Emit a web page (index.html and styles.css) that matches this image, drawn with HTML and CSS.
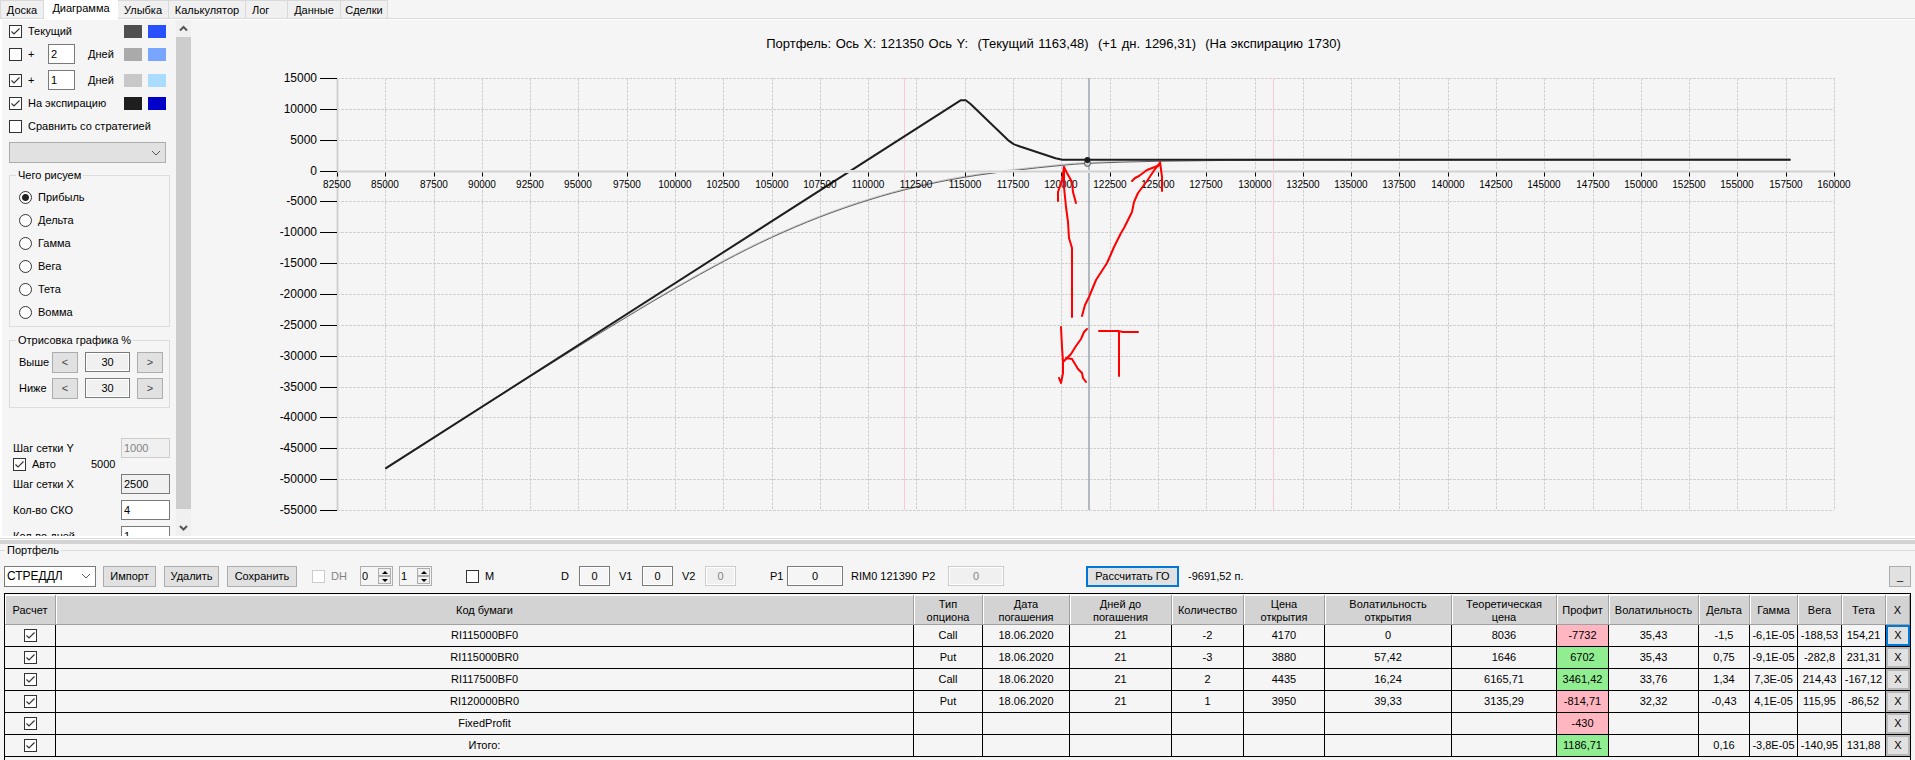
FILE: index.html
```
<!DOCTYPE html>
<html lang="ru">
<head>
    <meta charset="UTF-8">
    <meta name="viewport" content="width=device-width, initial-scale=1.0">
    <title>Диаграмма</title>
    <link rel="stylesheet" href="styles.css">
</head>
<body>
    <nav class="tabs">
        <button class="tab t-board">Доска</button>
        <button class="tab active">Диаграмма</button>
        <button class="tab t-smile">Улыбка</button>
        <button class="tab t-calc">Калькулятор</button>
        <button class="tab t-log">Лог</button>
        <button class="tab t-data">Данные</button>
        <button class="tab t-deals">Сделки</button>
    </nav>
    <main>
        <aside>
            <div class="settings">
                <div class="line">
                    <input type="checkbox" id="now" checked><label for="now">Текущий</label>
                    <i class="swatch c1"></i><i class="swatch c2"></i>
                </div>
                <div class="line tall">
                    <input type="checkbox" id="plus2"><label for="plus2">+</label>
                    <input type="text" class="days" id="days2" value="2"><label for="days2">Дней</label>
                    <i class="swatch c3"></i><i class="swatch c4"></i>
                </div>
                <div class="line tall">
                    <input type="checkbox" id="plus1" checked><label for="plus1">+</label>
                    <input type="text" class="days" id="days1" value="1"><label for="days1">Дней</label>
                    <i class="swatch c5"></i><i class="swatch c6"></i>
                </div>
                <div class="line">
                    <input type="checkbox" id="exp" checked><label for="exp">На экспирацию</label>
                    <i class="swatch c7"></i><i class="swatch c8"></i>
                </div>
                <div class="line tall">
                    <input type="checkbox" id="cmp"><label for="cmp">Сравнить со стратегией</label>
                </div>
                <select class="strategy" aria-label="Стратегия" disabled><option></option></select>

                <fieldset class="group what">
                    <legend>Чего рисуем</legend>
                    <label><input type="radio" name="what" checked>Прибыль</label>
                    <label><input type="radio" name="what">Дельта</label>
                    <label><input type="radio" name="what">Гамма</label>
                    <label><input type="radio" name="what">Вега</label>
                    <label><input type="radio" name="what">Тета</label>
                    <label><input type="radio" name="what">Вомма</label>
                </fieldset>

                <fieldset class="group range">
                    <legend>Отрисовка графика %</legend>
                    <div class="step">
                        <label for="above">Выше</label>
                        <button>&lt;</button><input type="text" id="above" value="30" readonly><button>&gt;</button>
                    </div>
                    <div class="step">
                        <label for="below">Ниже</label>
                        <button>&lt;</button><input type="text" id="below" value="30" readonly><button>&gt;</button>
                    </div>
                </fieldset>

                <div class="params">
                    <div class="param first"><label for="gy">Шаг сетки Y</label><input type="text" id="gy" value="1000" disabled></div>
                    <div class="auto"><input type="checkbox" id="auto" checked><label for="auto">Авто</label><span>5000</span></div>
                    <div class="param"><label for="gx">Шаг сетки X</label><input type="text" id="gx" value="2500" readonly></div>
                    <div class="param"><label for="sko">Кол-во СКО</label><input type="text" id="sko" value="4"></div>
                    <div class="param"><label for="dn">Кол-во дней</label><input type="text" id="dn" value="1"></div>
                </div>
            </div>
            <div class="scroll">
                <svg viewBox="0 0 15 17"><path d="M4 10.500L7.500 7l3.500 3.500"/></svg>
                <div class="thumb"></div>
                <svg viewBox="0 0 15 17"><path d="M4 7l3.500 3.500L11 7"/></svg>
            </div>
        </aside>
        <section class="chart">
            <svg id="plot"></svg>
            <!-- пометки от руки -->
            <svg class="ink" viewBox="0 0 1723 516" preserveAspectRatio="none">
                <polyline points="880,297 880,228 877,218 876,202 874,187 872,167 872,147"/>
                <polyline points="866,181 866,172 870,160 872,147 875,153 880,162 881,172 884,183"/>
                <polyline points="890,296 893,285 897,277 904,260 915,243 919,234 922,227 929,213 932,208 940,192 942,182 946,173 955,161 963,149 968,143"/>
                <polyline points="940,161 943,158 947,156 955,150 968,145"/>
                <polyline points="968,142 970,157 970,171"/>
                <polyline points="869,307 870,327 871,342 871,353 869,363 867,358"/>
                <polyline points="895,309 892,312 889,319 884,326 879,334 871,342"/>
                <polyline points="874,338 880,339 886,349 890,353 891,358 894,362"/>
                <polyline points="907,311 926,311 931,312 946,312"/>
                <polyline points="927,312 927,356"/>
            </svg>
        </section>
    </main>
    <div class="splitter"></div>
    <fieldset class="portfolio">
        <legend>Портфель</legend>
        <div class="toolbar">
            <select class="name" aria-label="Портфель"><option>СТРЕДДЛ</option></select>
            <button class="btn import">Импорт</button>
            <button class="btn remove">Удалить</button>
            <button class="btn save">Сохранить</button>
            <label class="dh"><input type="checkbox" disabled>DH</label>
            <div class="spin">
                <input type="text" value="0" aria-label="DH от">
                <div><button class="up" aria-label="Больше"></button><button class="down" aria-label="Меньше"></button></div>
            </div>
            <div class="spin">
                <input type="text" value="1" aria-label="DH до">
                <div><button class="up" aria-label="Больше"></button><button class="down" aria-label="Меньше"></button></div>
            </div>
            <label class="m"><input type="checkbox">M</label>
            <label class="d" for="d">D</label><input type="text" class="num" id="d" value="0">
            <label class="v" for="v1">V1</label><input type="text" class="num" id="v1" value="0">
            <label class="v" for="v2">V2</label><input type="text" class="num" id="v2" value="0" disabled>
            <label class="p1" for="p1">P1</label><input type="text" class="num wide" id="p1" value="0">
            <span class="rim">RIM0 121390</span>
            <label class="p2" for="p2">P2</label><input type="text" class="num wide" id="p2" value="0" disabled>
            <button class="btn calc">Рассчитать ГО</button>
            <span class="go">-9691,52 п.</span>
            <button class="btn fold">_</button>
        </div>
        <div class="grid">
            <table>
                <colgroup>
                    <col class="w-check"><col><col class="w-type"><col class="w-date"><col class="w-days"><col class="w-qty">
                    <col class="w-price"><col class="w-vopen"><col class="w-theor"><col class="w-profit"><col class="w-vol">
                    <col class="w-delta"><col class="w-gamma"><col class="w-vega"><col class="w-vega"><col class="w-x">
                </colgroup>
                <thead>
                    <tr>
                        <th>Расчет</th><th>Код бумаги</th><th>Тип<br>опциона</th><th>Дата<br>погашения</th><th>Дней до<br>погашения</th>
                        <th>Количество</th><th>Цена<br>открытия</th><th>Волатильность<br>открытия</th><th>Теоретическая<br>цена</th>
                        <th>Профит</th><th>Волатильность</th><th>Дельта</th><th>Гамма</th><th>Вега</th><th>Тета</th><th>X</th>
                    </tr>
                </thead>
                <tbody>
                    <tr>
                        <td><input type="checkbox" aria-label="Расчет" checked></td><td>RI115000BF0</td><td>Call</td><td>18.06.2020</td><td>21</td><td>-2</td>
                        <td>4170</td><td>0</td><td>8036</td><td class="loss">-7732</td><td>35,43</td><td>-1,5</td><td>-6,1E-05</td><td>-188,53</td><td>154,21</td><td><button class="focus">X</button></td>
                    </tr>
                    <tr>
                        <td><input type="checkbox" aria-label="Расчет" checked></td><td>RI115000BR0</td><td>Put</td><td>18.06.2020</td><td>21</td><td>-3</td>
                        <td>3880</td><td>57,42</td><td>1646</td><td class="gain">6702</td><td>35,43</td><td>0,75</td><td>-9,1E-05</td><td>-282,8</td><td>231,31</td><td><button>X</button></td>
                    </tr>
                    <tr>
                        <td><input type="checkbox" aria-label="Расчет" checked></td><td>RI117500BF0</td><td>Call</td><td>18.06.2020</td><td>21</td><td>2</td>
                        <td>4435</td><td>16,24</td><td>6165,71</td><td class="gain">3461,42</td><td>33,76</td><td>1,34</td><td>7,3E-05</td><td>214,43</td><td>-167,12</td><td><button>X</button></td>
                    </tr>
                    <tr>
                        <td><input type="checkbox" aria-label="Расчет" checked></td><td>RI120000BR0</td><td>Put</td><td>18.06.2020</td><td>21</td><td>1</td>
                        <td>3950</td><td>39,33</td><td>3135,29</td><td class="loss">-814,71</td><td>32,32</td><td>-0,43</td><td>4,1E-05</td><td>115,95</td><td>-86,52</td><td><button>X</button></td>
                    </tr>
                    <tr>
                        <td><input type="checkbox" aria-label="Расчет" checked></td><td>FixedProfit</td><td></td><td></td><td></td><td></td>
                        <td></td><td></td><td></td><td class="loss">-430</td><td></td><td></td><td></td><td></td><td></td><td><button>X</button></td>
                    </tr>
                    <tr>
                        <td><input type="checkbox" aria-label="Расчет" checked></td><td>Итого:</td><td></td><td></td><td></td><td></td>
                        <td></td><td></td><td></td><td class="gain">1186,71</td><td></td><td>0,16</td><td>-3,8E-05</td><td>-140,95</td><td>131,88</td><td><button>X</button></td>
                    </tr>
                </tbody>
            </table>
        </div>
    </fieldset>
    <script src="chart.js"></script>
</body>
</html>
```
FILE: styles.css
```
* {
    box-sizing: border-box;
}
body {
    margin: 0;
    height: 100vh;
    display: flex;
    flex-direction: column;
    overflow: hidden;
    background-color: #f5f5f5;
    color: #000;
    font-family: "Liberation Sans", Arial, sans-serif;
    font-size: 11px;
    line-height: 13px;
}
input, button, select {
    font: inherit;
    color: inherit;
    margin: 0;
    border-radius: 0;
}
button {
    padding: 0;
    background-color: #e1e1e1;
    border: 1px solid #adadad;
}
input[type=text] {
    height: 20px;
    padding: 0 2px;
    background-color: #fff;
    border: 1px solid #7a7a7a;
}
input[type=text]:read-only {
    background-color: #f0f0f0;
}
input[type=text]:disabled {
    background-color: #f0f0f0;
    border-color: #ccc;
    color: #838383;
}
input[type=checkbox], input[type=radio] {
    appearance: none;
    flex: none;
    width: 13px;
    height: 13px;
    background: #fff center no-repeat;
    border: 1px solid #333;
}
input[type=checkbox]:checked {
    background-image: url("data:image/svg+xml,%3Csvg xmlns='http://www.w3.org/2000/svg' width='11' height='11'%3E%3Cpath d='M1.500 5.500l2.500 2.500L9.500 2.500' fill='none' stroke='%23333' stroke-width='1.200'/%3E%3C/svg%3E");
}
input[type=checkbox]:disabled {
    border-color: #ccc;
}
input[type=radio] {
    border-radius: 50%;
}
input[type=radio]:checked {
    background-image: radial-gradient(#222 3px, #fff 4px);
}

/* вкладки */
.tabs {
    display: flex;
    flex: none;
    height: 20px;
    background: linear-gradient(#f5f5f5 18px, #d9d9d9 18px, #d9d9d9 19px, #fff 19px);
}
.tab {
    height: 19px;
    background-color: #f0f0f0;
    border: 1px solid #d9d9d9;
    border-left: none;
    padding-top: 1px;
}
.tab.active {
    width: 74px;
    height: 20px;
    background-color: #fff;
    border: none;
    padding: 0 0 3px;
}
.t-board { width: 44px; border-left: 1px solid #d9d9d9; }
.t-smile { width: 51px; }
.t-calc { width: 77px; }
.t-log { width: 42px; text-align: left; padding-left: 6px; }
.t-data { width: 53px; }
.t-deals { width: 47px; }

main {
    flex: 1;
    min-height: 0;
    display: flex;
    border-left: 2px solid #fff;
}
aside {
    flex: none;
    display: flex;
    width: 189px;
    margin-right: 1px;
}
.settings {
    flex: 1;
    overflow: hidden;
    padding: 1px 6px 0 7px;
}
.line {
    display: flex;
    align-items: center;
    height: 20px;
}
.line.tall {
    height: 26px;
}
.line label {
    margin-left: 6px;
}
.line .days {
    width: 27px;
    margin: 0 7px 0 auto;
}
.days + label {
    width: 30px;
}
.swatch {
    width: 18px;
    height: 13px;
    margin-right: 6px;
}
label + .swatch {
    margin-left: auto;
}
.days + label + .swatch {
    margin-left: 6px;
}
.swatch + .swatch {
    margin-right: 4px;
}
.c1 { background-color: #505050; }
.c2 { background-color: #2850ff; }
.c3 { background-color: #aaa; }
.c4 { background-color: #78a5ff; }
.c5 { background-color: #c8c8c8; }
.c6 { background-color: #aadcff; }
.c7 { background-color: #1e1e1e; }
.c8 { background-color: #0000c8; }

select {
    appearance: none;
    opacity: 1;
    padding: 0 2px;
    background: #fff url("data:image/svg+xml,%3Csvg xmlns='http://www.w3.org/2000/svg' width='10' height='6'%3E%3Cpath d='M1 1l4 4 4-4' fill='none' stroke='%23555'/%3E%3C/svg%3E") right 4px center no-repeat;
    border: 1px solid #7a7a7a;
}
.strategy {
    display: block;
    width: 157px;
    height: 21px;
    margin-top: 3px;
    background-color: #e1e1e1;
    border-color: #adadad;
}
.group {
    margin: 0;
    padding: 0;
    border: 1px solid #dcdcdc;
}
.group legend {
    margin-left: 6px;
    padding: 0 2px;
}
.what {
    margin-top: 6px;
    height: 158px;
}
.what label {
    display: flex;
    align-items: center;
    gap: 6px;
    height: 23px;
    margin-left: 9px;
}
.what legend + label {
    margin-top: 4px;
}
.range {
    margin-top: 7px;
    height: 74px;
}
.step {
    display: flex;
    height: 21px;
    margin: 5px 6px 0 9px;
}
.step label {
    width: 33px;
    line-height: 21px;
}
.step button {
    width: 26px;
    color: #444;
}
.step input {
    width: 45px;
    margin: 0 7px;
    text-align: center;
    box-shadow: inset 0 0 0 1px #fff;
}
.params {
    margin: 30px 0 0 4px;
}
.param {
    display: flex;
    align-items: center;
    justify-content: space-between;
    margin-bottom: 6px;
}
.param.first {
    margin-bottom: 0;
}
.param input {
    width: 49px;
}
.auto {
    display: flex;
    align-items: center;
    height: 13px;
    margin-bottom: 3px;
}
.auto label {
    width: 65px;
    padding-left: 6px;
}
.scroll {
    display: flex;
    flex-direction: column;
    width: 15px;
    background-color: #f0f0f0;
}
.scroll svg {
    flex: none;
    height: 17px;
    fill: none;
    stroke: #555;
    stroke-width: 2;
}
.thumb {
    flex: 1;
    margin-bottom: 10px;
    background-color: #cdcdcd;
}

/* график */
.chart {
    position: relative;
    flex: 1;
    min-width: 0;
}
.chart svg {
    position: absolute;
    width: 100%;
    height: 100%;
}
.ink {
    fill: none;
    stroke: #f00;
    stroke-width: 2;
    stroke-linejoin: round;
    stroke-linecap: round;
}
.gridline {
    stroke: #d0d0d0;
    stroke-dasharray: 3 1;
}
.tick { stroke: #000; }
.axis-wide { stroke: #e4e4e4; stroke-width: 3; }
.axis { stroke: #d0d0d0; }
.sko { stroke: #ffc8d0; }
.price { stroke: #b0b8c0; stroke-width: 2; }
.curve { fill: none; }
.plus { stroke: #c8c8c8; }
.now { stroke: #606060; }
.exp { stroke: #1e1e1e; stroke-width: 2; }
.dot { fill: #1e1e1e; }
.ring { fill: #d0d0d0; stroke: #505050; }
.title {
    font-size: 13px;
    word-spacing: 1px;
    text-anchor: middle;
    white-space: pre;
}
.ylabel { font-size: 12px; text-anchor: end; }
.xlabel { font-size: 10px; text-anchor: middle; }

.splitter {
    flex: none;
    height: 8px;
    background: linear-gradient(#fff 2px, #d9d9d9 2px, #d9d9d9 3px, #fff 3px, #fff 4px, #d3d3d3 4px);
}

/* портфель */
.portfolio {
    flex: none;
    min-width: 0;
    margin: 0;
    padding: 0 4px;
    border: none;
    border-top: 1px solid #dcdcdc;
}
.portfolio > legend {
    margin-left: 1px;
    padding: 0 2px;
}
.toolbar {
    display: flex;
    align-items: center;
    height: 36px;
    padding-top: 2px;
    white-space: nowrap;
}
.name {
    width: 92px;
    height: 21px;
    font-size: 12px;
}
.btn {
    height: 21px;
}
.import { width: 53px; margin-left: 7px; }
.remove { width: 55px; margin-left: 8px; }
.save { width: 70px; margin-left: 8px; }
.dh, .m {
    display: flex;
    gap: 6px;
}
.dh {
    width: 42px;
    margin-left: 15px;
    color: #838383;
}
.m {
    width: 61px;
    margin-left: 34px;
}
.spin {
    display: flex;
    width: 33px;
    height: 20px;
    margin-left: 6px;
    border: 1px solid #adadad;
}
.spin input[type=text] {
    flex: 1;
    min-width: 0;
    height: 18px;
    padding: 0 1px;
    border: none;
    background-color: #f5f5f5;
}
.spin div {
    display: flex;
    flex-direction: column;
    width: 15px;
    padding: 1px;
}
.spin button {
    display: flex;
    flex: 1;
    align-items: center;
    justify-content: center;
    background-color: #f0f0f0;
}
.spin button::before {
    content: '';
    border: 3px solid transparent;
}
.spin .up::before { border-top-width: 0; border-bottom-color: #000; }
.spin .down::before { border-bottom-width: 0; border-top-color: #000; }
.num {
    width: 31px;
    text-align: center;
}
.toolbar .num {
    background-color: #f5f5f5;
    box-shadow: inset 0 0 0 1px #fff;
}
.num.wide { width: 56px; }
.d { width: 18px; margin-left: 34px; }
.v { width: 23px; margin-left: 9px; }
.p1 { width: 17px; margin-left: 34px; }
.rim { width: 71px; margin-left: 8px; }
.p2 { width: 26px; }
.calc {
    width: 93px;
    margin-left: 82px;
    border: 2px solid #0078d7;
}
.go { margin-left: 9px; }
.fold {
    width: 22px;
    margin-left: auto;
}
.grid {
    padding: 1px 0 3px;
    border: 1px solid #000;
    border-bottom: none;
}
table {
    width: 100%;
    table-layout: fixed;
    border-spacing: 0;
    text-align: center;
}
th {
    height: 30px;
    padding: 2px 0 0;
    font-weight: normal;
    background-color: #d3d3d3;
    border-right: 1px solid #a0a0a0;
    border-bottom: 1px solid #a0a0a0;
    box-shadow: inset 1px 1px #fff;
}
td {
    height: 22px;
    padding: 0;
    border-right: 1px solid #000;
    border-bottom: 1px solid #000;
}
td:last-child {
    border-right: none;
}
td input[type=checkbox] {
    display: block;
    margin: 0 auto;
}
td button {
    display: block;
    width: 100%;
    height: 21px;
    border: 2px solid #b8b8b8;
}
td .focus {
    border-color: #0078d7;
}
.loss { background-color: #ffb6c1; }
.gain { background-color: #90ee90; }
.w-check { width: 51px; }
.w-type { width: 69px; }
.w-date { width: 87px; }
.w-days { width: 102px; }
.w-qty { width: 72px; }
.w-price { width: 81px; }
.w-vopen { width: 127px; }
.w-theor { width: 105px; }
.w-profit { width: 52px; }
.w-vol { width: 90px; }
.w-delta { width: 51px; }
.w-gamma { width: 48px; }
.w-vega { width: 44px; }
.w-x { width: 24px; }
```
FILE: chart.js
```
const svg = document.getElementById("plot")
const pad = { left: 145, right: 81, top: 58, bottom: 26 }
const X = { min: 82500, max: 160000, step: 2500 }
const Y = { min: -55000, max: 15000, step: 5000 }

const expiry = [
    [85000, -48300], [114600, 11000], [114800, 11400], [115050, 11400], [115300, 10800],
    [117250, 4900], [117550, 4250], [117900, 3850], [119700, 2000], [120050, 1760], [157750, 1760]
]
const current = [
    [85000, -48300], [90000, -38340], [95000, -28500], [98100, -22600], [100030, -19050], [102500, -14750],
    [105000, -10850], [107500, -7530], [110000, -4800], [112500, -2650], [115000, -1080],
    [117500, 0], [120000, 830], [121365, 1163], [125090, 1510], [132000, 1700], [157750, 1740]
]

function add(tag, cls, attrs, text) {
    const el = document.createElementNS("http://www.w3.org/2000/svg", tag)
    el.setAttribute("class", cls)
    for (const k in attrs) el.setAttribute(k, attrs[k])
    if (text !== undefined) el.textContent = text
    svg.appendChild(el)
}
function line(cls, x1, y1, x2, y2) {
    add("line", cls, { x1, y1, x2, y2 })
}

function draw() {
    const w = svg.clientWidth
    const h = svg.clientHeight
    const right = w - pad.right
    const bottom = h - pad.bottom
    const px = v => pad.left + (v - X.min) / (X.max - X.min) * (right - pad.left)
    const py = v => bottom - (v - Y.min) / (Y.max - Y.min) * (bottom - pad.top)
    const sharp = v => Math.round(v) + 0.5
    // сглаживание через касательные соседних точек
    const smooth = (pts, dy) => {
        const p = pts.map(([x, y]) => [px(x), py(y) + dy])
        let d = `M${p[0]}`
        for (let i = 0; i < p.length - 1; i++) {
            const a = p[i - 1] || p[i], b = p[i], c = p[i + 1], e = p[i + 2] || c
            const t = (c[0] - b[0]) / 3
            const s1 = (c[1] - a[1]) / (c[0] - a[0])
            const s2 = (e[1] - b[1]) / (e[0] - b[0])
            d += `C${b[0] + t},${b[1] + s1 * t} ${c[0] - t},${c[1] - s2 * t} ${c}`
        }
        return d
    }

    svg.innerHTML = ""
    for (let x = X.min; x <= X.max; x += X.step) {
        line("gridline", sharp(px(x)), pad.top, sharp(px(x)), bottom)
    }
    for (let y = Y.min; y <= Y.max; y += Y.step) {
        line("gridline", pad.left, sharp(py(y)), right, sharp(py(y)))
    }
    line("sko", sharp(px(111865)), pad.top, sharp(px(111865)), bottom)
    line("sko", sharp(px(130950)), pad.top, sharp(px(130950)), bottom)
    line("price", Math.round(px(121420)), pad.top, Math.round(px(121420)), bottom)

    add("path", "curve plus", { d: smooth(current, -1) })
    add("path", "curve now", { d: smooth(current, 0) })
    add("polyline", "curve exp", { points: expiry.map(([x, y]) => [px(x), py(y)]).join(" "), "stroke-linejoin": "round" })

    const zero = sharp(py(0))
    const left = pad.left + 0.5
    line("axis-wide", left, pad.top, left, bottom)
    line("axis-wide", left, zero, right, zero)
    line("axis", left, pad.top, left, bottom)
    line("axis", left, zero, right, zero)
    add("circle", "ring", { cx: px(121350), cy: py(1163), r: 3 })
    add("circle", "dot", { cx: px(121350), cy: py(1730), r: 3 })

    for (let y = Y.min; y <= Y.max; y += Y.step) {
        line("tick", pad.left - 17, sharp(py(y)), pad.left, sharp(py(y)))
        add("text", "ylabel", { x: pad.left - 20, y: Math.round(py(y)) + 4 }, y)
    }
    for (let x = X.min; x <= X.max; x += X.step) {
        line("tick", sharp(px(x)), zero + 1, sharp(px(x)), zero + 5)
        add("text", "xlabel", { x: Math.round(px(x)), y: zero + 16.5 }, x)
    }
    add("text", "title", { x: w / 2, y: 28 },
        "Портфель: Ось X: 121350 Ось Y:  (Текущий 1163,48)  (+1 дн. 1296,31)  (На экспирацию 1730)")
}
draw()
window.addEventListener("resize", draw)
```
